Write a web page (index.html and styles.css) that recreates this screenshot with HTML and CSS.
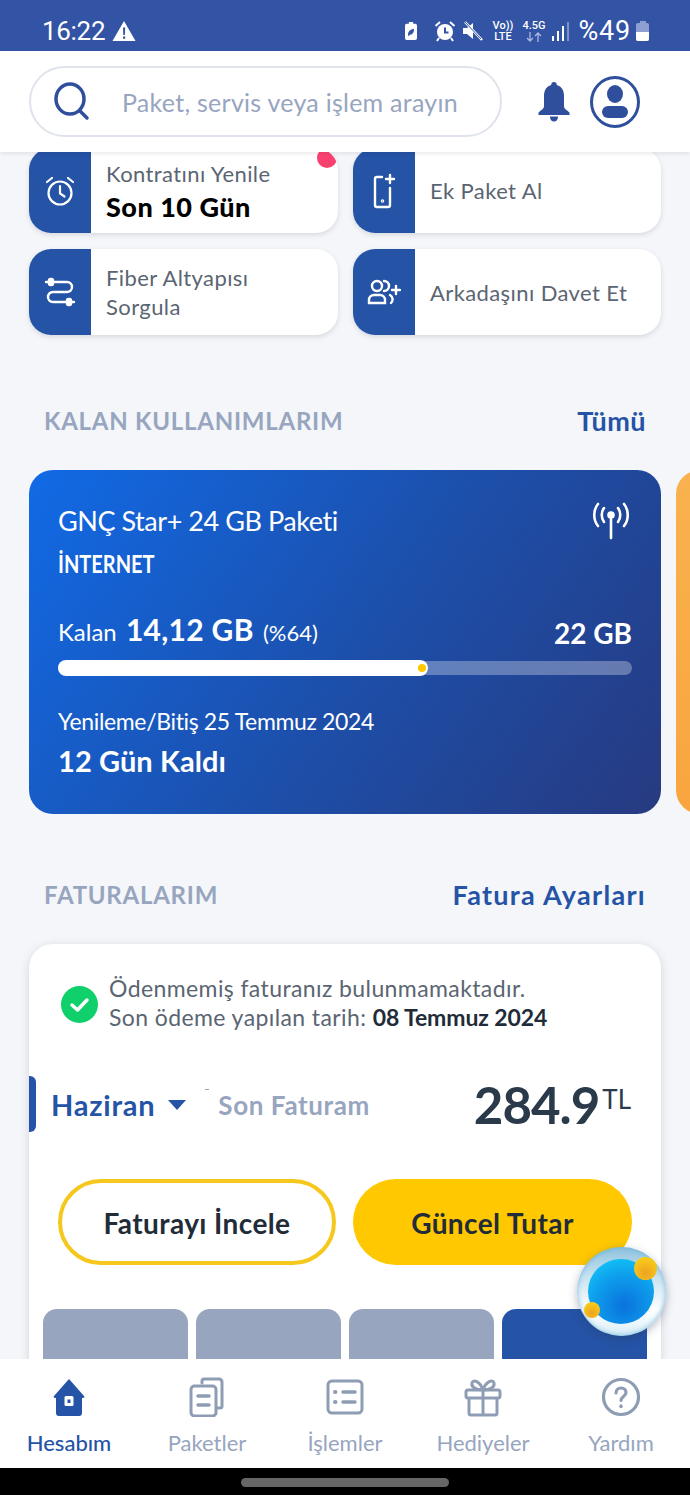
FILE: index.html
```html
<!DOCTYPE html>
<html lang="tr">
<head>
  <meta charset="UTF-8">
  <meta name="viewport" content="width=device-width, initial-scale=1.0">
  <title>Hesabım</title>
  <link rel="stylesheet" href="styles.css">
</head>
<body>
  <div class="phone">
    <div class="status-bar">
      <div class="status-left">
        <span class="clock">16:22</span>
        <svg width="24" height="22" viewBox="0 0 24 22"><path d="M12 1L23.500 21H.5z" fill="#fff"/><path d="M11 7.500h2.200l-.3 7.500h-1.600zM11 16.500h2.200v2.200H11z" fill="#3353a4"/></svg>
      </div>
      <div class="status-right">
        <svg width="12" height="20" viewBox="0 0 14 21"><path d="M4.500 0h5v2H12a2 2 0 0 1 2 2v15a2 2 0 0 1-2 2H2a2 2 0 0 1-2-2V4a2 2 0 0 1 2-2h2.500z" fill="#fff"/><path d="M3.500 15c0-4 3-6.500 7-7 0 4-1.500 7-5 7l-1 2z" fill="#3353a4"/></svg>
        <svg class="st-alarm" width="22" height="22" viewBox="0 0 22 22"><circle cx="11" cy="12" r="8" fill="#fff"/><path d="M11 7.500V12.500h3.500" fill="none" stroke="#3353a4" stroke-width="2"/><path d="M1.500 6L6 2M20.500 6L16 2M5 18l-2 3M17 18l2 3" stroke="#fff" stroke-width="2"/></svg>
        <svg width="22" height="22" viewBox="0 0 22 22"><path d="M1 8h4l6-5v16l-6-5H1z" fill="#fff"/><path d="M3 2l17 18" stroke="#fff" stroke-width="2.500"/><path d="M2 1l17 18" stroke="#3353a4" stroke-width="1"/></svg>
        <span class="net-text">Vo))<br>LTE</span>
        <div class="net-g">
          <span class="net-text">4.5G</span>
          <svg width="18" height="10" viewBox="0 0 18 10" fill="none" stroke="#a9b7dc" stroke-width="1.300"><path d="M5 0v9M2 6l3 3 3-3M13 10V1M10 4l3-3 3 3"/></svg>
        </div>
        <span class="signal"><i class="s1"></i><i class="s2"></i><i class="s3"></i><i class="s4"></i></span>
        <span class="battery-text">%49</span>
        <span class="battery"><span class="battery-cap"></span><span class="battery-body"><span class="battery-fill"></span></span></span>
      </div>
    </div>

    <header class="top-bar">
      <div class="search">
        <svg width="40" height="40" viewBox="0 0 40 40"><ellipse cx="18" cy="18" rx="14" ry="15" fill="none" stroke="#2f4f9c" stroke-width="3.500"/><path d="M28 30l7 7" stroke="#2f4f9c" stroke-width="3.500" stroke-linecap="round"/></svg>
        <span class="search-text">Paket, servis veya işlem arayın</span>
      </div>
      <svg class="bell" width="34" height="42" viewBox="0 0 34 42"><path d="M17 1c1.800 0 2.800 1.300 2.800 3 5 1.500 7.200 5.500 7.200 11v10c0 3 3 4 5.500 6.500V34H1.500v-2.500C4 29 7 28 7 25V15C7 9.500 9.200 5.500 14.200 4c0-1.700 1-3 2.800-3z" fill="#2f4f9c"/><path d="M13 35.500h8c0 3-1.500 5-4 5s-4-2-4-5z" fill="#2f4f9c"/></svg>
      <svg class="avatar" width="50" height="52" viewBox="0 0 50 52"><ellipse cx="25" cy="26" rx="23.500" ry="24.500" fill="none" stroke="#2f4f9c" stroke-width="3"/><ellipse cx="25" cy="18" rx="8" ry="9" fill="#2f4f9c"/><rect x="12" y="30" width="26" height="12" rx="6" fill="#2f4f9c"/></svg>
    </header>

    <main class="content">
      <div class="quick-grid">
        <div class="quick-card">
          <span class="quick-icon">
            <svg width="32" height="32" viewBox="0 0 32 32" fill="none" stroke="#fff" stroke-width="2.200" stroke-linecap="round"><circle cx="16" cy="18" r="11.500"/><path d="M16 11v7.500l4.500 3M3 7l5-4M29 7l-5-4"/></svg>
          </span>
          <div class="quick-text quick-text-contract">
            <span>Kontratını Yenile</span>
            <strong>Son 10 Gün</strong>
          </div>
          <span class="red-dot"></span>
        </div>
        <div class="quick-card">
          <span class="quick-icon">
            <svg width="32" height="36" viewBox="0 0 32 36" fill="none" stroke="#fff" stroke-width="2.400" stroke-linecap="round"><path d="M14 4H9a2 2 0 0 0-2 2v26a2 2 0 0 0 2 2h11a2 2 0 0 0 2-2V15"/><path d="M22 2v8M18 6h8"/><circle cx="14.500" cy="28" r=".6"/></svg>
          </span>
          <div class="quick-text"><span>Ek Paket Al</span></div>
        </div>
        <div class="quick-card">
          <span class="quick-icon">
            <svg width="32" height="32" viewBox="0 0 32 32" fill="none" stroke="#fff" stroke-width="2.400" stroke-linecap="round"><path d="M7 6h16a5 5 0 0 1 0 10H9a5 5 0 0 0 0 10h15"/><path d="M2 6h5M24 26h6"/><rect x="5" y="3" width="4" height="6" rx="1.500" fill="#fff"/><rect x="23" y="23" width="4" height="6" rx="1.500" fill="#fff"/></svg>
          </span>
          <div class="quick-text"><span>Fiber Altyapısı Sorgula</span></div>
        </div>
        <div class="quick-card">
          <span class="quick-icon">
            <svg width="34" height="26" viewBox="0 0 34 26" fill="none" stroke="#fff" stroke-width="2.400" stroke-linecap="round"><circle cx="10" cy="7" r="5"/><path d="M2 24v-3a5 5 0 0 1 5-5h6a5 5 0 0 1 5 5v3zM17 2a5 5 0 0 1 0 10M23 16a5 5 0 0 1 1 8M29 7v8M25 11h8"/></svg>
          </span>
          <div class="quick-text"><span>Arkadaşını Davet Et</span></div>
        </div>
      </div>

      <section class="section-head usage-head">
        <h2>KALAN KULLANIMLARIM</h2>
        <a>Tümü</a>
      </section>

      <div class="carousel">
        <div class="usage-card">
          <div class="usage-top">
            <div>
              <div class="usage-name">GNÇ Star+ 24 GB Paketi</div>
              <div class="usage-type">İNTERNET</div>
            </div>
            <svg width="38" height="38" viewBox="0 0 38 38" fill="none" stroke="#fff" stroke-width="2.600" stroke-linecap="round"><path d="M19 15v21"/><circle cx="19" cy="13" r="2.500" fill="#fff"/><path d="M12 6c-3 4-3 10 0 14M26 6c3 4 3 10 0 14M6 2c-5 6-5 16 0 22M32 2c5 6 5 16 0 22"/></svg>
          </div>
          <div class="usage-row">
            <div class="usage-left">Kalan <b>14,12 GB</b> <small>(%64)</small></div>
            <div class="usage-total">22 GB</div>
          </div>
          <div class="bar"><div class="bar-fill" style="width: 64.4%"><span class="bar-dot"></span></div></div>
          <div class="usage-renew">Yenileme/Bitiş 25 Temmuz 2024</div>
          <div class="usage-days">12 Gün Kaldı</div>
        </div>
        <div class="usage-card usage-card-next"></div>
      </div>

      <section class="section-head bills-head">
        <h2>FATURALARIM</h2>
        <a>Fatura Ayarları</a>
      </section>

      <div class="bill-card">
        <div class="bill-note">
          <svg width="37" height="37" viewBox="0 0 37 37"><circle cx="18.500" cy="18.500" r="18.500" fill="#0fd06a"/><path d="M11 19l5.500 5L26 14" fill="none" stroke="#fff" stroke-width="3.500" stroke-linecap="round" stroke-linejoin="round"/></svg>
          <p>Ödenmemiş faturanız bulunmamaktadır.<br>Son ödeme yapılan tarih: <b>08 Temmuz 2024</b></p>
        </div>
        <div class="bill-row">
          <span class="month-mark"></span>
          <span class="month">Haziran</span>
          <span class="caret"></span>
          <span class="bill-label">Son Faturam</span>
          <span class="bill-amount">284.9<sup>TL</sup></span>
        </div>
        <div class="bill-actions">
          <button class="btn btn-outline">Faturayı İncele</button>
          <button class="btn btn-fill">Güncel Tutar</button>
        </div>
        <div class="month-bars">
          <span></span><span></span><span></span><span class="active"></span>
        </div>
      </div>

      <div class="bubble"><span class="bubble-core"></span><span class="coin coin-big"></span><span class="coin coin-small"></span></div>
    </main>

    <nav class="tabs">
      <div class="tab active">
        <svg width="40" height="40" viewBox="0 0 40 40"><path d="M20 2L35 19c.8 1 0 2-1 2h-1v15a3 3 0 0 1-3 3H10a3 3 0 0 1-3-3V21H6c-1 0-1.800-1-1-2z" fill="#2553a6"/><rect x="15.500" y="19" width="9" height="10" rx="1.500" fill="#fff"/><rect x="18.500" y="22.500" width="3" height="3.500" fill="#2553a6"/></svg>
        <span>Hesabım</span>
      </div>
      <div class="tab">
        <svg width="40" height="40" viewBox="0 0 40 40" fill="none" stroke="#8e9db3" stroke-width="3" stroke-linecap="round"><path d="M15 6V4a2 2 0 0 1 2-2h15a3 3 0 0 1 3 3v24a2 2 0 0 1-2 2h-3"/><rect x="4" y="9" width="25" height="30" rx="3.500"/><path d="M11 19h11M11 28h11" stroke-width="3.500"/></svg>
        <span>Paketler</span>
      </div>
      <div class="tab">
        <svg width="40" height="40" viewBox="0 0 40 40" fill="none" stroke="#8e9db3" stroke-width="3" stroke-linecap="round"><rect x="3" y="4" width="34" height="32" rx="4"/><path d="M18 15h12M18 25h12" stroke-width="3.500"/><path d="M10 15h.5M10 25h.5" stroke-width="4"/></svg>
        <span>İşlemler</span>
      </div>
      <div class="tab">
        <svg width="40" height="40" viewBox="0 0 40 40" fill="none" stroke="#8e9db3" stroke-width="3" stroke-linejoin="round"><rect x="3" y="13" width="34" height="8" rx="2"/><path d="M6 21v15a2 2 0 0 0 2 2h24a2 2 0 0 0 2-2V21M20 13v25M20 13c-3-9-10-11-11-7s4 7 11 7zM20 13c3-9 10-11 11-7s-4 7-11 7z"/></svg>
        <span>Hediyeler</span>
      </div>
      <div class="tab">
        <svg width="40" height="40" viewBox="0 0 40 40" fill="none" stroke="#8e9db3" stroke-width="3.200" stroke-linecap="round"><circle cx="20" cy="20" r="17.500"/><path d="M15 16c0-3 2.200-5 5-5s5 2 5 4.500c0 4-5 4-5 8"/><path d="M20 29v.5" stroke-width="3.500"/></svg>
        <span>Yardım</span>
      </div>
    </nav>

    <div class="gesture-area"><span class="gesture-pill"></span></div>
  </div>
</body>
</html>
```

FILE: styles.css
```css
:root {
  --blue: #2553a6;
  --muted: #97a5bf;
  --body-text: #5b6572;
  --dark-text: #222c38;
  --yellow: #ffc800;
}
* {
  box-sizing: border-box;
}
body {
  margin: 0;
  font-family: 'Lato', 'Noto Sans', sans-serif;
  background: #000;
}
.phone {
  width: 690px;
  height: 1495px;
  display: flex;
  flex-direction: column;
  overflow: hidden;
  background: #f4f6f9;
}

/* status bar */
.status-bar {
  height: 51px;
  flex: none;
  padding: 11px 41px 0 42px;
  background: #3353a4;
  color: #fff;
  display: flex;
  justify-content: space-between;
  align-items: center;
}
.status-left {
  display: flex;
  align-items: center;
  gap: 7px;
}
.clock {
  font-family: 'Roboto', sans-serif;
  font-size: 26px;
  letter-spacing: -0.3px;
}
.status-right {
  display: flex;
  align-items: center;
  gap: 9px;
}
.st-alarm {
  margin: 0 -3px 0 8px;
}
.net-text {
  font-family: 'Roboto', sans-serif;
  font-size: 11px;
  line-height: 11px;
  font-weight: 500;
  text-align: center;
}
.net-g {
  display: flex;
  flex-direction: column;
  align-items: center;
  gap: 1px;
}
.signal {
  display: flex;
  align-items: flex-end;
  gap: 3px;
  height: 20px;
  margin-left: -2px;
}
.signal i {
  display: block;
  width: 2px;
  background: #fff;
}
.signal .s1 { height: 5px; }
.signal .s2 { height: 10px; }
.signal .s3 { height: 15px; }
.signal .s4 { height: 19px; background: #7f93c8; }
.battery-text {
  font-family: 'Roboto', sans-serif;
  font-size: 27px;
  letter-spacing: 0.8px;
  margin-right: -4px;
}
.battery {
  display: flex;
  flex-direction: column;
  align-items: center;
  width: 13px;
}
.battery-cap {
  width: 6px;
  height: 2px;
  background: #8ea0d2;
}
.battery-body {
  width: 13px;
  height: 18px;
  border-radius: 2px;
  background: #8ea0d2;
  display: flex;
  align-items: flex-end;
  overflow: hidden;
}
.battery-fill {
  width: 100%;
  height: 9px;
  background: #fff;
}

/* header */
.top-bar {
  height: 101px;
  flex: none;
  display: flex;
  align-items: center;
  padding: 0 0 0 29px;
  background: #fff;
  box-shadow: 0 2px 4px rgba(0, 0, 0, 0.08);
  position: relative;
  z-index: 3;
}
.search {
  width: 473px;
  height: 71px;
  flex: none;
  display: flex;
  align-items: center;
  gap: 30px;
  padding-left: 21px;
  border: 2px solid #dfe3ec;
  border-radius: 36px;
  margin-bottom: 1px;
}
.search-text {
  font-size: 25px;
  letter-spacing: 0.26px;
  color: var(--muted);
  padding-top: 1px;
}
.bell {
  margin-left: 35px;
}
.avatar {
  margin-left: 19px;
}

/* scrolling content */
.content {
  flex: 1;
  position: relative;
  min-height: 0;
  overflow: hidden;
  padding: 0 0 0 29px;
}
.quick-grid {
  width: 632px;
  display: grid;
  grid-template-columns: 309px 308px;
  grid-template-rows: 85px 86px;
  column-gap: 15px;
  row-gap: 16px;
  margin-top: -4px;
}
.quick-card {
  position: relative;
  display: flex;
  align-items: center;
  background: #fff;
  border-radius: 22px;
  box-shadow: 0 2px 5px rgba(60, 70, 100, 0.16);
  overflow: hidden;
}
.quick-icon {
  width: 62px;
  height: 100%;
  flex: none;
  background: var(--blue);
  display: flex;
  align-items: center;
  justify-content: center;
}
.quick-text {
  padding-left: 15px;
  width: 200px;
  font-size: 22px;
  line-height: 29px;
  letter-spacing: 0.4px;
  color: var(--body-text);
}
.quick-text span,
.quick-text strong {
  display: block;
}
.quick-text strong {
  font-size: 27px;
  line-height: 38px;
  letter-spacing: 0.5px;
  color: #000;
  font-weight: 900;
}
.quick-text-contract {
  padding-top: 3px;
}
.quick-card:nth-child(4) .quick-text {
  width: auto;
}
.red-dot {
  position: absolute;
  top: 0;
  right: 1px;
  width: 20px;
  height: 20px;
  border-radius: 50%;
  background: #f9416f;
}
.section-head {
  width: 602px;
  margin-left: 15px;
  display: flex;
  justify-content: space-between;
  align-items: center;
}
.section-head h2 {
  margin: 0;
  font-size: 24px;
  font-weight: 700;
  letter-spacing: 0.75px;
  color: var(--muted);
}
.section-head a {
  font-size: 27px;
  font-weight: 700;
  letter-spacing: 0.5px;
  color: var(--blue);
}
.usage-head {
  margin-top: 67px;
  height: 36px;
}

/* usage card */
.carousel {
  display: flex;
  gap: 15px;
  margin-top: 32px;
}
.usage-card {
  width: 632px;
  height: 344px;
  flex: none;
  padding: 35px 29px 0;
  border-radius: 24px;
  color: #fff;
  background: linear-gradient(125deg, #116ae6 0%, #1d4ea8 55%, #273a80 100%);
}
.usage-card-next {
  background: linear-gradient(180deg, #f9b24f, #f9a53f);
}
.usage-top {
  display: flex;
  justify-content: space-between;
  align-items: flex-start;
  height: 95px;
}
.usage-top svg {
  margin: -3px 2px 0 0;
}
.usage-name {
  font-size: 27px;
  line-height: 32px;
  letter-spacing: -0.45px;
}
.usage-type {
  margin-top: 11px;
  font-size: 25px;
  line-height: 30px;
  font-weight: 700;
  transform: scaleX(0.8);
  transform-origin: left center;
}
.usage-row {
  margin-top: 11px;
  display: flex;
  justify-content: space-between;
  align-items: center;
  height: 44px;
}
.usage-left {
  font-size: 24px;
  padding-bottom: 8px;
}
.usage-left b {
  font-size: 30px;
  font-weight: 700;
  letter-spacing: 0.3px;
  margin: 0 3px;
}
.usage-left small {
  font-size: 22px;
}
.usage-total {
  font-size: 28px;
  font-weight: 700;
}
.bar {
  height: 14px;
  margin-top: 6px;
  border-radius: 7px;
  background: rgba(255, 255, 255, 0.3);
}
.bar-fill {
  height: 16px;
  position: relative;
  top: -1px;
  border-radius: 8px;
  background: #fff;
}
.bar-dot {
  position: absolute;
  right: 2px;
  top: 4px;
  width: 8px;
  height: 8px;
  border-radius: 50%;
  background: var(--yellow);
}
.usage-renew {
  margin-top: 30px;
  font-size: 23px;
  line-height: 32px;
  letter-spacing: -0.35px;
}
.usage-days {
  margin-top: 4px;
  font-size: 29px;
  line-height: 40px;
  font-weight: 700;
  letter-spacing: 0.1px;
}

/* bills */
.bills-head {
  margin-top: 62px;
  height: 36px;
}
.bills-head a {
  letter-spacing: 1.3px;
}
.bill-card {
  width: 632px;
  height: 440px;
  margin-top: 32px;
  background: #fff;
  border-radius: 24px 24px 0 0;
  box-shadow: 0 2px 10px rgba(60, 70, 100, 0.18);
  padding-top: 30px;
}
.bill-note {
  display: flex;
  align-items: center;
  gap: 11px;
  padding-left: 32px;
}
.bill-note svg {
  margin-top: 2px;
}
.bill-note p {
  margin: 0;
  font-size: 23px;
  line-height: 29px;
  letter-spacing: 0.4px;
  color: var(--body-text);
}
.bill-note b {
  letter-spacing: -0.1px;
  color: var(--dark-text);
}
.bill-row {
  position: relative;
  height: 56px;
  margin-top: 44px;
  display: flex;
  align-items: center;
  padding: 1px 0 0 22px;
}
.month-mark {
  position: absolute;
  left: 0;
  top: 0;
  width: 7px;
  height: 56px;
  border-radius: 0 6px 6px 0;
  background: var(--blue);
}
.month {
  font-size: 29px;
  font-weight: 700;
  letter-spacing: 0.75px;
  color: var(--blue);
}
.caret {
  margin-left: 13px;
  border-left: 9px solid transparent;
  border-right: 9px solid transparent;
  border-top: 10px solid var(--blue);
}
.bill-label {
  position: relative;
  margin-left: 32px;
  font-size: 26px;
  font-weight: 700;
  letter-spacing: 0.6px;
  color: var(--muted);
}
.bill-label::before {
  content: "";
  position: absolute;
  left: -13px;
  top: 0;
  width: 4px;
  height: 1px;
  background: var(--muted);
}
.bill-amount {
  margin-left: auto;
  margin-right: 30px;
  font-size: 51px;
  font-weight: 700;
  letter-spacing: -1px;
  color: #2a3a4a;
}
.bill-amount sup {
  font-size: 26px;
  font-weight: 400;
  letter-spacing: 0;
  vertical-align: 15px;
  line-height: 0;
  margin-left: 3px;
}
.bill-actions {
  display: grid;
  grid-template-columns: 278px 279px;
  column-gap: 17px;
  margin: 47px 0 0 29px;
}
.btn {
  height: 86px;
  padding-top: 3px;
  border-radius: 43px;
  font-family: inherit;
  font-size: 28px;
  font-weight: 700;
  letter-spacing: 0.4px;
  color: var(--dark-text);
}
.btn-outline {
  background: #fff;
  border: 4px solid #f6c81e;
}
.btn-fill {
  background: var(--yellow);
  border: none;
}
.month-bars {
  display: grid;
  grid-template-columns: repeat(4, 145px);
  column-gap: 8px;
  margin: 44px 0 0 14px;
}
.month-bars span {
  height: 100px;
  border-radius: 14px 14px 0 0;
  background: var(--muted);
}
.month-bars .active {
  background: var(--blue);
}

/* floating assistant */
.bubble {
  position: absolute;
  left: 577px;
  top: 1095px;
  width: 89px;
  height: 89px;
  border-radius: 50%;
  background: linear-gradient(180deg, #8fc3de 0%, #cfe6f2 38%, #fff 72%, #d6edf7 100%);
  box-shadow: 0 3px 10px rgba(40, 60, 90, 0.35), inset 0 0 5px rgba(90, 170, 215, 0.8);
}
.bubble-core {
  position: absolute;
  left: 11px;
  top: 12px;
  width: 66px;
  height: 65px;
  border-radius: 50%;
  background: radial-gradient(circle at 55% 72%, #0a72dc 0%, #0d9cec 50%, #14d4fa 100%);
}
.coin {
  position: absolute;
  border-radius: 50%;
  background: radial-gradient(circle at 50% 70%, #eda322, #fdd816);
}
.coin-big {
  left: 57px;
  top: 10px;
  width: 23px;
  height: 23px;
}
.coin-small {
  left: 7px;
  top: 55px;
  width: 16px;
  height: 16px;
}

/* bottom nav */
.tabs {
  height: 109px;
  flex: none;
  display: grid;
  grid-template-columns: repeat(5, 138px);
  background: #fff;
  position: relative;
  z-index: 2;
}
.tab {
  display: flex;
  flex-direction: column;
  align-items: center;
  padding-top: 18px;
  gap: 12px;
  font-size: 22px;
  line-height: 28px;
  color: var(--muted);
}
.tab.active {
  color: var(--blue);
  font-weight: 500;
}
.gesture-area {
  height: 27px;
  flex: none;
  background: #000;
  display: flex;
  justify-content: center;
  padding-top: 10px;
}
.gesture-pill {
  width: 208px;
  height: 9px;
  border-radius: 5px;
  background: #666;
}
```
